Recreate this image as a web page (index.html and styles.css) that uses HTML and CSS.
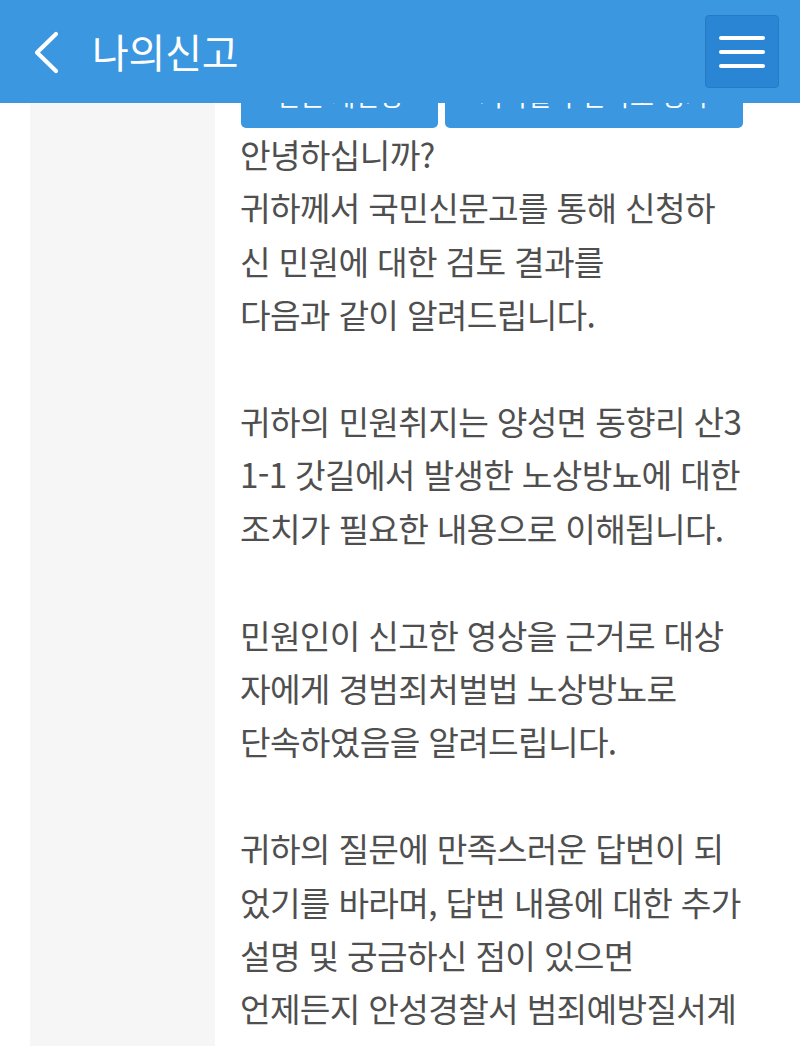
FILE: index.html
```html
<!DOCTYPE html>
<html lang="ko">
<head>
<meta charset="utf-8">
<title>나의신고</title>
<link rel="stylesheet" href="styles.css">
</head>
<body>
<header class="topbar">
  <button class="back" aria-label="뒤로">
    <svg width="30" height="44" viewBox="0 0 30 44"><polyline points="24,3 5,21.5 24,40" fill="none" stroke="#fff" stroke-width="4.2" stroke-linecap="round" stroke-linejoin="round"/></svg>
  </button>
  <h1 class="title">나의신고</h1>
  <button class="menu" aria-label="메뉴">
    <span class="bar"></span><span class="bar"></span><span class="bar"></span>
  </button>
</header>
<div class="page">
  <aside class="side"></aside>
  <main class="content">
    <div class="actions">
      <button class="btn btn-left">민원 재신청</button>
      <button class="btn btn-right">처리결과 만족도 평가</button>
    </div>
    <div class="answer">
      <p class="para">안녕하십니까?<br>귀하께서 국민신문고를 통해 신청하<br>신 민원에 대한 검토 결과를<br>다음과 같이 알려드립니다.</p>
      <p class="para">귀하의 민원취지는 양성면 동향리 산3<br>1-1 갓길에서 발생한 노상방뇨에 대한<br>조치가 필요한 내용으로 이해됩니다.</p>
      <p class="para">민원인이 신고한 영상을 근거로 대상<br>자에게 경범죄처벌법 노상방뇨로<br>단속하였음을 알려드립니다.</p>
      <p class="para">귀하의 질문에 만족스러운 답변이 되<br>었기를 바라며, 답변 내용에 대한 추가<br>설명 및 궁금하신 점이 있으면<br>언제든지 안성경찰서 범죄예방질서계</p>
    </div>
  </main>
</div>
</body>
</html>
```
FILE: styles.css
```css
* { box-sizing: border-box; }
html, body { margin: 0; padding: 0; }
body {
  background: #ffffff;
  font-family: "Noto Sans CJK KR", "Noto Sans", sans-serif;
  overflow: hidden;
  height: 1046px;
}
.topbar {
  position: fixed;
  top: 0; left: 0; right: 0;
  height: 103px;
  background: #3a97e0;
  display: flex;
  align-items: center;
  padding: 0 21px 0 32px;
  z-index: 10;
}
.back {
  background: none;
  border: 0;
  padding: 0;
  width: 30px;
  height: 44px;
  display: flex;
  margin-top: 2px;
}
.title {
  margin: -1px 0 0 30px;
  color: #ffffff;
  font-size: 40px;
  font-weight: 400;
  letter-spacing: -0.2px;
  line-height: 1;
}
.menu {
  margin-left: auto;
  width: 74px;
  height: 73px;
  background: #2a86d4;
  border: 1px solid #2779c2;
  border-radius: 4px;
  display: flex;
  flex-direction: column;
  justify-content: center;
  align-items: center;
  gap: 10px;
  padding: 0;
  align-self: flex-start;
  margin-top: 15px;
}
.bar {
  display: block;
  width: 46px;
  height: 4px;
  background: #ffffff;
  border-radius: 2px;
}
.page {
  display: flex;
  min-height: 1046px;
}
.side {
  width: 185px;
  margin-left: 30px;
  background: #f6f6f6;
  flex: none;
}
.content {
  padding-left: 25px;
  flex: 1;
  padding-top: 68px;
}
.actions {
  display: flex;
  gap: 7px;
  padding-left: 1px;
}
.btn {
  height: 60px;
  background: #3a97e0;
  border: 0;
  border-radius: 5px;
  color: #ffffff;
  font-family: "Noto Sans CJK KR", sans-serif;
  font-size: 26px;
  padding: 0 0 8px 0;
}
.btn-left { width: 197px; }
.btn-right { width: 298px; }
.answer {
  color: #4f4f4f;
  font-size: 33.3px;
  font-weight: 400;
  line-height: 53.4px;
  letter-spacing: -0.7px;
  white-space: nowrap;
  margin-top: -1px;
}
.para {
  margin: 0 0 53.4px 0;
}
```
